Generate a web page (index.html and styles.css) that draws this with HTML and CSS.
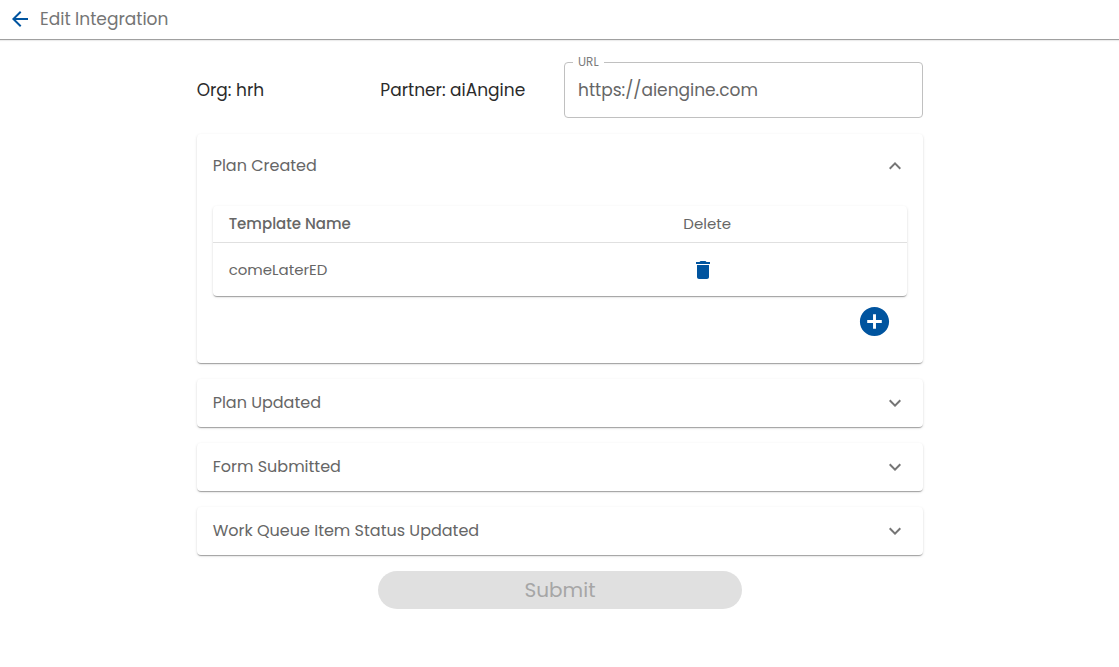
FILE: index.html
```html
<!DOCTYPE html>
<html lang="en">
<head>
<meta charset="utf-8">
<meta name="viewport" content="width=device-width, initial-scale=1">
<title>Edit Integration</title>
<link rel="stylesheet" href="styles.css">
</head>
<body>
<header class="topbar">
  <button class="icon-button" type="button" aria-label="Back">
    <svg class="back-icon" viewBox="0 0 24 24" aria-hidden="true"><path d="M20 11H7.830l5.590-5.590L12 4l-8 8 8 8 1.410-1.410L7.830 13H20z"/></svg>
  </button>
  <h1 class="title">Edit Integration</h1>
</header>
<main class="content">
  <form class="form">
    <div class="details">
      <p class="detail">Org: hrh</p>
      <p class="detail">Partner: aiAngine</p>
      <div class="field">
        <label class="field-label" for="url">URL</label>
        <input class="field-input" id="url" type="text" value="https://aiengine.com">
      </div>
    </div>

    <section class="panel">
      <button class="summary summary-open" type="button" aria-expanded="true" aria-controls="plan-created">
        <span>Plan Created</span>
        <svg class="chevron" viewBox="0 0 24 24" aria-hidden="true"><path d="M12 8l-6 6 1.410 1.410L12 10.830l4.590 4.580L18 14z"/></svg>
      </button>
      <div class="panel-body" id="plan-created">
        <table class="templates">
          <thead>
            <tr><th class="name-column" scope="col">Template Name</th><th class="delete-column" scope="col">Delete</th></tr>
          </thead>
          <tbody>
            <tr>
              <td>comeLaterED</td>
              <td>
                <button class="icon-button delete-button" type="button" aria-label="Delete comeLaterED">
                  <svg class="trash-icon" viewBox="0 0 24 24" aria-hidden="true"><path d="M6 19c0 1.100.9 2 2 2h8c1.100 0 2-.9 2-2V7H6v12zM19 4h-3.500l-1-1h-5l-1 1H5v2h14V4z"/></svg>
                </button>
              </td>
            </tr>
          </tbody>
        </table>
        <div class="actions">
          <button class="icon-button" type="button" aria-label="Add template">
            <svg class="add-icon" viewBox="0 0 24 24" aria-hidden="true"><path d="M12 2C6.480 2 2 6.480 2 12s4.480 10 10 10 10-4.480 10-10S17.520 2 12 2zm5 11h-4v4h-2v-4H7v-2h4V7h2v4h4v2z"/></svg>
          </button>
        </div>
      </div>
    </section>

    <section class="panel">
      <button class="summary" type="button" aria-expanded="false">
        <span>Plan Updated</span>
        <svg class="chevron" viewBox="0 0 24 24" aria-hidden="true"><path d="M16.590 8.590L12 13.170 7.410 8.590 6 10l6 6 6-6z"/></svg>
      </button>
    </section>
    <section class="panel">
      <button class="summary" type="button" aria-expanded="false">
        <span>Form Submitted</span>
        <svg class="chevron" viewBox="0 0 24 24" aria-hidden="true"><path d="M16.590 8.590L12 13.170 7.410 8.590 6 10l6 6 6-6z"/></svg>
      </button>
    </section>
    <section class="panel">
      <button class="summary" type="button" aria-expanded="false">
        <span>Work Queue Item Status Updated</span>
        <svg class="chevron" viewBox="0 0 24 24" aria-hidden="true"><path d="M16.590 8.590L12 13.170 7.410 8.590 6 10l6 6 6-6z"/></svg>
      </button>
    </section>

    <button class="submit" type="submit" disabled>Submit</button>
  </form>
</main>
</body>
</html>
```
FILE: styles.css
```css
* {
  box-sizing: border-box;
}

body {
  margin: 0;
  background: #fff;
  color: #666;
  font-family: Poppins, Inter, "Open Sans", sans-serif;
  font-size: 16px;
  font-weight: 400;
  line-height: 24px;
}

button,
input {
  font: inherit;
  color: inherit;
}

svg {
  display: block;
  fill: currentColor;
}

.icon-button {
  display: block;
  padding: 0;
  border: 0;
  background: none;
  color: #00549f;
  cursor: pointer;
}

.topbar {
  display: flex;
  align-items: center;
  gap: 8px;
  padding: 0 8px 2px;
  height: 40px;
  border-bottom: 1px solid #a0a0a0;
  box-shadow: 0 1px 1px #ececec;
}

.back-icon {
  width: 24px;
  height: 24px;
}

.title {
  margin: 0;
  color: #757575;
  font-size: 17px;
  font-weight: 400;
}

.content {
  padding-left: 1px;
}

.form {
  display: flex;
  flex-direction: column;
  gap: 16px;
  width: 65%;
  margin: 0 auto;
  padding: 22px 0;
}

.details {
  display: grid;
  grid-template-columns: 1fr 1fr 2fr;
  align-items: center;
  gap: 4px;
}

.detail {
  margin: 0;
  color: #2b2b2b;
  font-size: 17px;
}

.field {
  position: relative;
}

.field-label {
  position: absolute;
  top: -8px;
  left: 9px;
  padding: 0 5px;
  background: #fff;
  color: #7c7c7c;
  font-size: 12px;
  line-height: 16px;
}

.field-input {
  display: block;
  width: 100%;
  height: 56px;
  padding: 0 13px;
  border: 1px solid #c0c0c0;
  border-radius: 4px;
  background: transparent;
  font-size: 17px;
}

.panel {
  border-radius: 4px;
  background: #fff;
  box-shadow: 0 2px 1px -1px rgba(0, 0, 0, 0.2), 0 1px 1px rgba(0, 0, 0, 0.14), 0 1px 3px rgba(0, 0, 0, 0.12);
}

.summary {
  display: flex;
  align-items: center;
  justify-content: space-between;
  width: 100%;
  min-height: 48px;
  padding: 0 16px;
  border: 0;
  background: none;
  text-align: left;
  cursor: pointer;
}

.summary-open {
  min-height: 64px;
}

.chevron {
  width: 24px;
  height: 24px;
  color: #757575;
}

.panel-body {
  padding: 8px 16px 24px;
}

.templates {
  width: 100%;
  border-spacing: 0;
  border-radius: 4px;
  box-shadow: 0 2px 1px -1px rgba(0, 0, 0, 0.2), 0 1px 1px rgba(0, 0, 0, 0.14), 0 1px 3px rgba(0, 0, 0, 0.12);
  font-size: 15px;
  text-align: left;
}

.templates th {
  padding: 6px 16px;
  border-bottom: 1px solid #e0e0e0;
}

.templates td {
  height: 53px;
  padding: 0 16px;
}

.name-column {
  font-weight: 500;
}

.templates .delete-column {
  width: 240px;
  font-weight: 400;
}

.delete-button {
  padding: 0 8px;
}

.trash-icon {
  width: 24px;
  height: 24px;
}

.actions {
  display: flex;
  justify-content: flex-end;
  padding: 8px 15px 0;
}

.add-icon {
  width: 35px;
  height: 35px;
}

.submit {
  align-self: center;
  width: 50%;
  height: 38px;
  border: 0;
  border-radius: 19px;
  background: #e0e0e0;
  color: #a6a6a6;
  font-size: 20px;
}
```
